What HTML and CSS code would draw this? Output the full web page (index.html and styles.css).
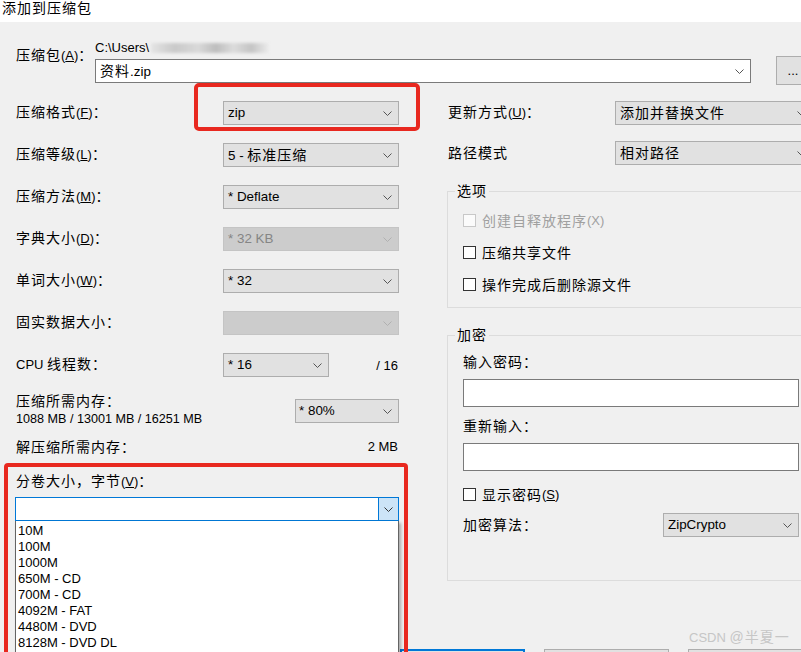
FILE: index.html
```html
<!DOCTYPE html>
<html lang="zh-CN">
<head>
<meta charset="utf-8">
<title>添加到压缩包</title>
<link rel="stylesheet" href="styles.css">
</head>
<body>
<div class="window">
  <div class="titlebar">添加到压缩包</div>
  <div class="dialog">
    <div class="archive">
      <div class="archive-label">压缩包<span class="l">(<u>A</u>)</span>：</div>
      <div class="archive-main">
        <div class="path"><span class="l">C:\Users\</span><span class="redact"></span></div>
        <div class="combo edit"><span class="val">资料<span class="l">.zip</span></span><svg class="chev" width="9" height="5" viewBox="0 0 9 5"><path d="M0.5 0.5 L4.5 4.5 L8.5 0.5" fill="none" stroke="#555" stroke-width="1"/></svg></div>
      </div>
      <div class="browse"><span class="l">...</span></div>
    </div>

    <div class="columns">
      <div class="left">
        <div class="row">
          <div class="lbl">压缩格式<span class="l">(<u>F</u>)</span>：</div>
          <div class="combo"><span class="val l">zip</span><svg class="chev" width="9" height="5" viewBox="0 0 9 5"><path d="M0.5 0.5 L4.5 4.5 L8.5 0.5" fill="none" stroke="#555" stroke-width="1"/></svg></div>
        </div>
        <div class="row">
          <div class="lbl">压缩等级<span class="l">(<u>L</u>)</span>：</div>
          <div class="combo"><span class="val"><span class="l">5 - </span>标准压缩</span><svg class="chev" width="9" height="5" viewBox="0 0 9 5"><path d="M0.5 0.5 L4.5 4.5 L8.5 0.5" fill="none" stroke="#555" stroke-width="1"/></svg></div>
        </div>
        <div class="row">
          <div class="lbl">压缩方法<span class="l">(<u>M</u>)</span>：</div>
          <div class="combo"><span class="val l">* Deflate</span><svg class="chev" width="9" height="5" viewBox="0 0 9 5"><path d="M0.5 0.5 L4.5 4.5 L8.5 0.5" fill="none" stroke="#555" stroke-width="1"/></svg></div>
        </div>
        <div class="row">
          <div class="lbl">字典大小<span class="l">(<u>D</u>)</span>：</div>
          <div class="combo disabled"><span class="val l">* 32 KB</span><svg class="chev" width="9" height="5" viewBox="0 0 9 5"><path d="M0.5 0.5 L4.5 4.5 L8.5 0.5" fill="none" stroke="#b0b0b0" stroke-width="1"/></svg></div>
        </div>
        <div class="row">
          <div class="lbl">单词大小<span class="l">(<u>W</u>)</span>：</div>
          <div class="combo"><span class="val l">* 32</span><svg class="chev" width="9" height="5" viewBox="0 0 9 5"><path d="M0.5 0.5 L4.5 4.5 L8.5 0.5" fill="none" stroke="#555" stroke-width="1"/></svg></div>
        </div>
        <div class="row">
          <div class="lbl">固实数据大小：</div>
          <div class="combo disabled"><span class="val"></span><svg class="chev" width="9" height="5" viewBox="0 0 9 5"><path d="M0.5 0.5 L4.5 4.5 L8.5 0.5" fill="none" stroke="#b0b0b0" stroke-width="1"/></svg></div>
        </div>
        <div class="row">
          <div class="lbl"><span class="l">CPU </span>线程数：</div>
          <div class="combo cpu"><span class="val l">* 16</span><svg class="chev" width="9" height="5" viewBox="0 0 9 5"><path d="M0.5 0.5 L4.5 4.5 L8.5 0.5" fill="none" stroke="#555" stroke-width="1"/></svg></div>
          <div class="total l">/ 16</div>
        </div>
        <div class="mem">
          <div class="mem-lines">
            <div>压缩所需内存：</div>
            <div class="l small">1088 MB / 13001 MB / 16251 MB</div>
          </div>
          <div class="combo mem-combo"><span class="val l">* 80%</span><svg class="chev" width="9" height="5" viewBox="0 0 9 5"><path d="M0.5 0.5 L4.5 4.5 L8.5 0.5" fill="none" stroke="#555" stroke-width="1"/></svg></div>
        </div>
        <div class="decomp">
          <div>解压缩所需内存：</div>
          <div class="l">2 MB</div>
        </div>
        <div class="split-label">分卷大小，字节<span class="l">(<u>V</u>)</span>：</div>
        <div class="split">
          <div class="split-combo">
            <div class="split-btn"><svg class="chev" width="9" height="5" viewBox="0 0 9 5"><path d="M0.5 0.5 L4.5 4.5 L8.5 0.5" fill="none" stroke="#333" stroke-width="1"/></svg></div>
          </div>
          <ul class="list">
            <li>10M</li>
            <li>100M</li>
            <li>1000M</li>
            <li>650M - CD</li>
            <li>700M - CD</li>
            <li>4092M - FAT</li>
            <li>4480M - DVD</li>
            <li>8128M - DVD DL</li>
          </ul>
        </div>
      </div>

      <div class="right">
        <div class="rrow">
          <div class="lbl">更新方式<span class="l">(<u>U</u>)</span>：</div>
          <div class="combo"><span class="val">添加并替换文件</span><svg class="chev" width="9" height="5" viewBox="0 0 9 5"><path d="M0.5 0.5 L4.5 4.5 L8.5 0.5" fill="none" stroke="#555" stroke-width="1"/></svg></div>
        </div>
        <div class="rrow">
          <div class="lbl">路径模式</div>
          <div class="combo"><span class="val">相对路径</span><svg class="chev" width="9" height="5" viewBox="0 0 9 5"><path d="M0.5 0.5 L4.5 4.5 L8.5 0.5" fill="none" stroke="#555" stroke-width="1"/></svg></div>
        </div>

        <fieldset class="group options">
          <legend>选项</legend>
          <div class="check disabled"><span class="box"></span>创建自释放程序<span class="l">(X)</span></div>
          <div class="check"><span class="box"></span>压缩共享文件</div>
          <div class="check"><span class="box"></span>操作完成后删除源文件</div>
        </fieldset>

        <fieldset class="group enc">
          <legend>加密</legend>
          <div class="enc-label">输入密码：</div>
          <div class="pw"></div>
          <div class="enc-label second">重新输入：</div>
          <div class="pw"></div>
          <div class="check show"><span class="box"></span>显示密码<span class="l">(<u>S</u>)</span></div>
          <div class="algo">
            <div class="lbl">加密算法：</div>
            <div class="combo"><span class="val l">ZipCrypto</span><svg class="chev" width="9" height="5" viewBox="0 0 9 5"><path d="M0.5 0.5 L4.5 4.5 L8.5 0.5" fill="none" stroke="#555" stroke-width="1"/></svg></div>
          </div>
        </fieldset>
      </div>
    </div>

    <div class="buttons">
      <div class="button default"></div>
      <div class="button"></div>
      <div class="button"></div>
    </div>
  </div>

  <div class="mark mark1"></div>
  <div class="mark mark2"></div>
  <div class="watermark"><span class="l">CSDN </span>@半夏一</div>
</div>
</body>
</html>
```

FILE: styles.css
```css
* { box-sizing: border-box; }
html, body { margin: 0; padding: 0; }
body {
  width: 801px;
  height: 652px;
  overflow: hidden;
  background: #f0f0f0;
  font-family: "Liberation Sans", "Noto Sans CJK SC", sans-serif;
  font-size: 14px;
  letter-spacing: 1px;
  color: #000;
}
.l { font-size: 13px; letter-spacing: 0; }
.small { font-size: 12.6px; }

.window { position: relative; width: 801px; height: 652px; overflow: hidden; }
.titlebar { height: 22px; background: #fff; padding-left: 2px; line-height: 17px; }
.dialog { height: 630px; padding: 18px 0 0 16px; }

/* archive row */
.archive { display: flex; height: 45px; }
.archive-label { width: 79px; flex: none; margin-top: 8px; line-height: 14px; }
.archive-main { width: 656px; flex: none; }
.path { height: 19px; line-height: 14px; white-space: nowrap; }
.redact {
  display: inline-block;
  width: 118px;
  height: 10px;
  margin-left: 2px;
  vertical-align: -1px;
  background: linear-gradient(90deg, #e4e4e4 0%, #c9c9c9 20%, #d9d9d9 40%, #bdbdbd 55%, #dcdcdc 70%, #c4c4c4 85%, #ececec 100%);
  filter: blur(1.4px);
}
.browse {
  flex: none;
  width: 34px;
  height: 29px;
  margin: 16px 0 0 25px;
  border: 1px solid #adadad;
  background: #e1e1e1;
  text-align: center;
  line-height: 27px;
}

/* combos */
.combo {
  display: flex;
  align-items: center;
  justify-content: space-between;
  height: 24px;
  flex: none;
  border: 1px solid #adadad;
  background: #e1e1e1;
  padding: 0 6px 0 4px;
  line-height: 22px;
  white-space: nowrap;
}
.combo .val.l, .combo .val .l { font-size: 13.4px; }
.combo.edit { background: #fff; border-color: #7a7a7a; }
.combo.disabled { background: #cccccc; border-color: #c4c4c4; color: #858585; }
.chev { flex: none; display: block; }

/* columns */
.columns {
  display: grid;
  grid-template-columns: 383px 361px;
  column-gap: 48px;
  margin-top: 16px;
}

/* left column */
.row { display: flex; align-items: center; height: 24px; margin-top: 18px; }
.row:first-child { margin-top: 0; }
.lbl { line-height: 18px; }
.row .lbl { width: 207px; flex: none; padding-bottom: 2px; }
.row .combo { width: 176px; }
.row .combo.cpu { width: 106px; }
.total { margin-left: auto; margin-right: 1px; }

.mem { display: flex; justify-content: space-between; margin-top: 15px; }
.mem-lines div { line-height: 18px; }
.mem .combo.mem-combo { width: 104px; margin-top: 7px; padding-left: 3px; }
.decomp { display: flex; justify-content: space-between; line-height: 18px; margin-top: 10px; padding-right: 1px; }
.split-label { line-height: 18px; margin-top: 16px; }

.split { position: relative; width: 384px; margin: 6px 0 0 -1px; }
.split-combo {
  height: 24px;
  border: 1px solid #0078d7;
  background: #fff;
  display: flex;
  justify-content: flex-end;
}
.split-btn {
  width: 20px;
  height: 22px;
  background: #cce4f7;
  border-left: 1px solid #0078d7;
  display: flex;
  align-items: center;
  justify-content: center;
}
.list {
  position: absolute;
  top: 24px;
  left: 0;
  width: 384px;
  height: 140px;
  margin: 0;
  padding: 2px 0 0;
  list-style: none;
  background: #fff;
  border: 1px solid #646464;
  border-top: none;
  box-shadow: 2px 2px 3px rgba(0, 0, 0, 0.3);
  font-size: 13px;
  letter-spacing: 0;
}
.list li { line-height: 16px; padding-left: 2px; white-space: nowrap; }

/* right column */
.rrow { display: flex; align-items: center; height: 24px; }
.rrow + .rrow { margin-top: 16px; }
.rrow .lbl { width: 168px; flex: none; padding-left: 1px; padding-bottom: 1px; }
.rrow .combo { width: 198px; }

.group {
  margin: 18px 0 0;
  min-width: 0;
  width: 361px;
  border: 1px solid #dcdcdc;
  padding: 12px 0 14px 15px;
}
.group legend { padding: 0 2px; margin-left: -8px; line-height: 16px; }
.group.enc { margin-top: 19px; padding: 10px 0 43px 15px; }

.check { display: flex; align-items: center; height: 18px; }
.check + .check { margin-top: 14px; }
.box {
  flex: none;
  width: 13px;
  height: 13px;
  margin-right: 6px;
  border: 1px solid #333;
  background: #fff;
}
.check.disabled { color: #a0a0a0; }
.check.disabled .box { border-color: #c8c8c8; background: #fbfbfb; }

.enc-label { line-height: 18px; }
.enc-label.second { margin-top: 10px; }
.pw { width: 336px; height: 28px; margin-top: 8px; border: 1px solid #7a7a7a; background: #fff; }
.check.show { margin-top: 14px; }
.algo { display: flex; align-items: center; height: 24px; margin-top: 10px; }
.algo .lbl { width: 200px; flex: none; }
.algo .combo { width: 136px; }

/* bottom buttons */
.buttons { display: flex; gap: 19px; margin: 68px 0 0 384px; }
.button {
  flex: none;
  width: 125px;
  height: 24px;
  border: 1px solid #adadad;
  background: #e1e1e1;
}
.button.default { border: 2px solid #0078d7; }

/* annotations */
.mark { position: absolute; border: 4px solid #e8281f; pointer-events: none; }
.mark1 { left: 194px; top: 83px; width: 226px; height: 48px; border-radius: 5px; }
.mark2 { left: 4px; top: 463px; width: 404px; height: 200px; border-radius: 4px; }

.watermark {
  position: absolute;
  left: 689px;
  top: 628px;
  line-height: 18px;
  color: #c6c6c6;
  white-space: nowrap;
}
```
